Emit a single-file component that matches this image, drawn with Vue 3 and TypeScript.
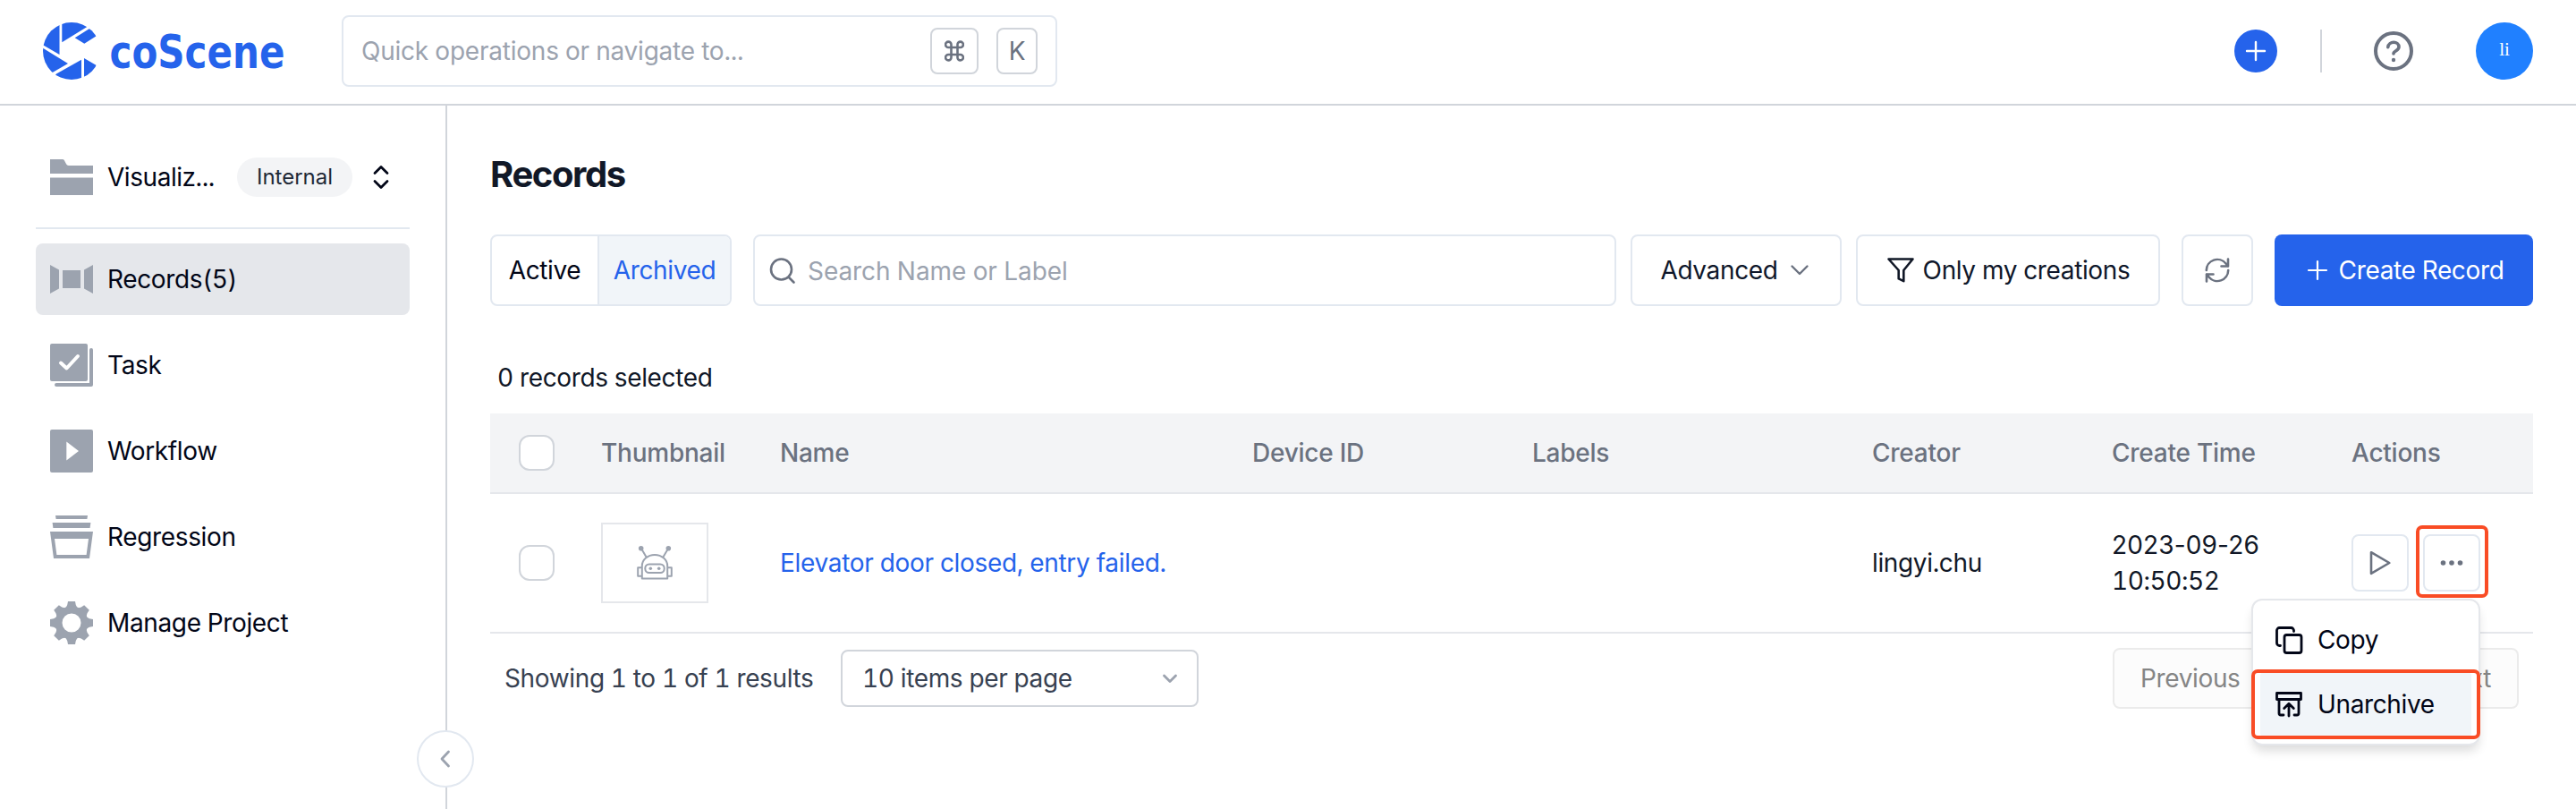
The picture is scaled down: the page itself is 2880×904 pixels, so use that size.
<script setup lang="ts">
import { ref } from 'vue'

interface NavItem {
  id: string
  label: string
}

const navItems: NavItem[] = [
  { id: 'records', label: 'Records(5)' },
  { id: 'task', label: 'Task' },
  { id: 'workflow', label: 'Workflow' },
  { id: 'regression', label: 'Regression' },
  { id: 'manage', label: 'Manage Project' },
]
const activeNav = ref('records')
const tab = ref<'Active' | 'Archived'>('Archived')
const columns: string[] = ['Thumbnail', 'Name', 'Device ID', 'Labels', 'Creator', 'Create Time', 'Actions']
const gearTeeth: number[] = [0, 45, 90, 135, 180, 225, 270, 315]
</script>

<template>
  <div class="app">
    <header class="topbar">
      <svg class="logo" width="278" height="64" viewBox="0 0 278 64">
        <defs>
          <clipPath id="disc"><circle cx="32" cy="32" r="32" /></clipPath>
        </defs>
        <g clip-path="url(#disc)">
          <path d="M18.5 0V36L0 25.2V0Z" />
          <path d="M21.3 0H56L49.3 5 21.3 22.3Z" />
          <path d="M52 7 56 6 62 14 59.7 15.3 46.3 23.7 35.7 17.3Z" />
          <path d="M0 28.8 28 46 12 55.3 0 62Z" />
          <path d="M43 41.7V64H10L15 57.5Z" />
          <path d="M46 40 59.7 48 58 64H46Z" />
        </g>
        <text x="74.5" y="51" textLength="196" lengthAdjust="spacingAndGlyphs">coScene</text>
      </svg>
      <div class="quick">
        <span class="placeholder">Quick operations or navigate to...</span>
        <kbd class="cmd">
          <svg width="22" height="24" viewBox="0 0 22 24" class="cmd-icon">
            <path d="M7.5 8V4.8A3.2 3.2 0 1 0 4.4 8H17.6A3.2 3.2 0 1 0 14.5 4.8V19.2A3.2 3.2 0 1 0 17.6 16H4.4A3.2 3.2 0 1 0 7.5 19.2Z" />
          </svg>
        </kbd>
        <kbd class="key">K</kbd>
      </div>
      <div class="top-actions">
        <button class="add">
          <svg width="24" height="24" viewBox="0 0 24 24"><path d="M12 2V22M2 12H22" /></svg>
        </button>
        <span class="rule"></span>
        <svg class="help" width="44" height="44" viewBox="0 0 44 44">
          <circle cx="22" cy="22" r="20" />
          <path d="M15.8 17.6C16.6 10.4 28 10.6 28 17.4C28 21.6 22 21.6 22 25" />
          <circle class="dot" cx="22" cy="32" r="2.2" />
        </svg>
        <span class="avatar">li</span>
      </div>
    </header>

    <div class="body">
      <aside class="sidebar">
        <div class="project">
          <svg width="48" height="48" viewBox="0 0 48 48" class="nav-icon">
            <path d="M0 4H14C17 4 17 11 21 11H48V20H0ZM0 24.5H48V44H0Z" />
          </svg>
          <span class="project-name">Visualiz...</span>
          <span class="pill">Internal</span>
          <svg width="20" height="28" viewBox="0 0 20 28" class="updown"><path d="M3 9.5 10 2.5 17 9.5M3 18.5 10 25.5 17 18.5" /></svg>
        </div>
        <nav class="nav">
          <a v-for="item in navItems" :key="item.id" class="nav-item" :class="{ active: item.id === activeNav }" @click="activeNav = item.id">
            <svg width="48" height="48" viewBox="0 0 48 48" class="nav-icon">
              <path v-if="item.id === 'records'" d="M0 8 10 13.5V34.5L0 40ZM14 14H34V34H14ZM48 8 38 13.5V34.5L48 40Z" />
              <template v-else-if="item.id === 'task'">
                <rect width="42" height="42" rx="2" />
                <path class="line check" d="M12 21.5 18.5 27.5 31 14" />
                <path class="line" d="M7 46H46V7" />
              </template>
              <template v-else-if="item.id === 'workflow'">
                <rect width="48" height="48" rx="2" />
                <path class="white" d="M18.3 13.5 32 24 18.3 34.5Z" />
              </template>
              <template v-else-if="item.id === 'regression'">
                <path d="M6 0H42L41.4 4H6.6ZM2.6 8H45.4L44.6 14H3.4Z" />
                <path fill-rule="evenodd" d="M0 18H48L44 48H4ZM5 26 7.4 44H40.6L43 26Z" />
              </template>
              <template v-else>
                <path v-for="a in gearTeeth" :key="a" d="M16.5 9 19.2 4 20 0H28L28.8 4 31.5 9Z" :transform="`rotate(${a} 24 24)`" />
                <circle class="ring" cx="24" cy="24" r="14.5" />
              </template>
            </svg>
            <span>{{ item.label }}</span>
          </a>
        </nav>
        <button class="collapse">
          <svg width="24" height="24" viewBox="0 0 24 24"><path d="M15.5 4 8 12 15.5 20" /></svg>
        </button>
      </aside>

      <main class="main">
        <h1>Records</h1>
        <div class="toolbar">
          <div class="segmented">
            <button class="seg" :class="{ on: tab === 'Active' }" @click="tab = 'Active'">Active</button>
            <button class="seg" :class="{ on: tab === 'Archived' }" @click="tab = 'Archived'">Archived</button>
          </div>
          <div class="search">
            <svg width="32" height="32" viewBox="0 0 32 32"><circle cx="14.5" cy="14" r="11.5" /><path d="M23 23 28.5 28.5" /></svg>
            <span>Search Name or Label</span>
          </div>
          <button class="btn advanced">
            <span>Advanced</span>
            <svg width="24" height="24" viewBox="0 0 24 24"><path d="M3.5 7.5 12 16 20.5 7.5" /></svg>
          </button>
          <button class="btn mine">
            <svg width="32" height="32" viewBox="0 0 32 32"><path d="M2.5 3.5H29.5L19.3 16V28.2L13.7 25.4V16Z" /></svg>
            <span>Only my creations</span>
          </button>
          <button class="btn refresh">
            <svg width="32" height="32" viewBox="0 0 32 32">
              <path d="M3.8 16A12.2 12.2 0 0 1 25.5 8.5L28 11.5M28 3.5V11.5H20.5M28.2 16A12.2 12.2 0 0 1 6.5 23.5L4 20.5M4 28.5V20.5H11.5" />
            </svg>
          </button>
          <button class="btn create">
            <svg width="24" height="24" viewBox="0 0 24 24"><path d="M12 2V22M2 12H22" /></svg>
            <span>Create Record</span>
          </button>
        </div>

        <p class="selected">0 records selected</p>

        <div class="row head">
          <span class="check-cell"><i class="box"></i></span>
          <span v-for="c in columns" :key="c">{{ c }}</span>
        </div>
        <div class="row record">
          <span class="check-cell"><i class="box"></i></span>
          <span>
            <span class="thumb">
              <svg width="40" height="40" viewBox="0 0 40 40">
                <path d="M5.8 37.6V23.5A14.2 12.6 0 0 1 34.2 23.5V37.6ZM5.8 25.2H1.2V34.8H5.8M34.2 25.2H38.8V34.8H34.2M10.3 13 5 4M29.7 13 35 4" />
                <rect x="9.3" y="21.4" width="21.4" height="9.6" rx="4.5" />
                <g class="fill">
                  <circle cx="4.7" cy="3.8" r="2.8" /><circle cx="35.3" cy="3.8" r="2.8" />
                  <circle cx="15.3" cy="26.2" r="1.8" /><circle cx="24.7" cy="26.2" r="1.8" />
                </g>
              </svg>
            </span>
          </span>
          <a class="link">Elevator door closed, entry failed.</a>
          <span></span>
          <span></span>
          <span class="creator">lingyi.chu</span>
          <span class="time">
            <span class="date">2023-09-26</span>
            <span class="clock">10:50:52</span>
          </span>
          <span class="actions">
            <button class="icon-btn">
              <svg width="32" height="32" viewBox="0 0 32 32"><path d="M6 4.2 26.3 16 6 27.8Z" /></svg>
            </button>
            <button class="icon-btn more">
              <svg width="32" height="32" viewBox="0 0 32 32"><g class="fill"><circle cx="6.5" cy="16" r="2.8" /><circle cx="16" cy="16" r="2.8" /><circle cx="25.5" cy="16" r="2.8" /></g></svg>
              <span class="mark mark-more"></span>
            </button>
            <div class="menu">
              <div class="menu-item">
                <svg width="32" height="32" viewBox="0 0 32 32">
                  <path d="M6.5 22.5H5.5A3 3 0 0 1 2.5 19.5V5.5A3 3 0 0 1 5.5 2.5H18.5A3 3 0 0 1 21.5 5.5V6.5" /><rect x="11" y="10.5" width="19" height="20" rx="2.5" />
                </svg>
                <span>Copy</span>
              </div>
              <div class="menu-item hover">
                <svg width="32" height="32" viewBox="0 0 32 32">
                  <path d="M2.5 3.5H29.5V10.5H2.5ZM5 10.5V26A2 2 0 0 0 7 28H10M27 10.5V26A2 2 0 0 1 25 28H22M16 29V16M10.7 20.5 16 15.3 21.3 20.5" />
                </svg>
                <span>Unarchive</span>
                <span class="mark mark-item"></span>
              </div>
            </div>
          </span>
        </div>

        <div class="footer">
          <span class="showing">Showing 1 to 1 of 1 results</span>
          <div class="select">
            <span>10 items per page</span>
            <svg width="20" height="20" viewBox="0 0 20 20"><path d="M3.5 7 10 13.5 16.5 7" /></svg>
          </div>
          <div class="pager">
            <button class="page">Previous</button>
            <button class="page">Next</button>
          </div>
        </div>
      </main>
    </div>
  </div>
</template>

<style>
body {
  background: #fff;
  overflow: hidden;
}
</style>

<style scoped>
.app {
  width: 2880px;
  height: 904px;
  display: flex;
  flex-direction: column;
  overflow: hidden;
  background: #fff;
  color: #020617;
  font-family: Inter, "Liberation Sans", sans-serif;
  font-size: 28px;
  font-variant-numeric: tabular-nums;
  line-height: 40px;
  letter-spacing: -0.36px;
}
.app *,
.app {
  box-sizing: border-box;
}
svg {
  flex: none;
  fill: none;
  stroke-linecap: round;
  stroke-linejoin: round;
}
button,
kbd {
  font: inherit;
  font-variant-numeric: inherit;
  letter-spacing: inherit;
  margin: 0;
  padding: 0;
  background: none;
  color: inherit;
}
.topbar {
  height: 118px;
  flex: none;
  display: flex;
  align-items: center;
  padding: 0 48px 2px;
  border-bottom: 2px solid #d1d5db;
}
.logo {
  fill: #2563eb;
  overflow: visible;
}
.logo text {
  font-family: "DejaVu Sans", sans-serif;
  font-weight: 700;
  font-size: 52px;
  letter-spacing: 0;
}
.quick {
  width: 800px;
  height: 80px;
  margin-left: 56px;
  display: flex;
  align-items: center;
  padding: 0 20px;
  border: 2px solid #e2e8f0;
  border-radius: 8px;
}
.placeholder {
  flex: 1;
  color: #9ca3af;
  letter-spacing: -0.22px;
}
kbd {
  height: 52px;
  display: flex;
  align-items: center;
  justify-content: center;
  border: 2px solid #d1d5db;
  border-radius: 8px;
  color: #6b7280;
}
.cmd {
  width: 54px;
}
.key {
  width: 46px;
  margin-left: 20px;
}
.cmd-icon {
  stroke: #6b7280;
  stroke-width: 2.6;
}
.top-actions {
  margin-left: auto;
  display: flex;
  align-items: center;
}
.add {
  width: 48px;
  height: 48px;
  border: 0;
  border-radius: 50%;
  background: #2563eb;
  display: grid;
  place-items: center;
}
.add svg {
  stroke: #fff;
  stroke-width: 2.4;
}
.rule {
  width: 2px;
  height: 48px;
  margin: 0 58px 0 48px;
  background: #d1d5db;
}
.help {
  stroke: #6b7280;
  stroke-width: 4;
}
.help path {
  stroke-width: 3.6;
}
.help .dot {
  fill: #6b7280;
  stroke: none;
}
.avatar {
  width: 64px;
  height: 64px;
  margin-left: 70px;
  border-radius: 50%;
  background: #2080ff;
  color: #fff;
  font: 21px/60px "Liberation Serif", serif;
  letter-spacing: 0;
  text-align: center;
}
.body {
  flex: 1;
  display: flex;
  min-height: 0;
}
.sidebar {
  position: relative;
  width: 500px;
  flex: none;
  padding: 0 40px;
  border-right: 2px solid #d1d5db;
}
.project {
  height: 138px;
  display: flex;
  align-items: center;
  padding: 24px 22px 0 16px;
  border-bottom: 2px solid #e2e8f0;
}
.nav-icon {
  fill: #9ca3af;
}
.project-name {
  margin-left: 16px;
  width: 145px;
  letter-spacing: -0.45px;
}
.pill {
  width: 129px;
  height: 44px;
  border-radius: 22px;
  background: #f3f4f6;
  color: #1f2937;
  font-size: 24px;
  line-height: 44px;
  letter-spacing: 0;
  text-align: center;
}
.updown {
  margin-left: auto;
  stroke: #020617;
  stroke-width: 2.8;
}
.nav {
  display: flex;
  flex-direction: column;
  gap: 16px;
  margin-top: 16px;
}
.nav-item {
  height: 80px;
  display: flex;
  align-items: center;
  gap: 16px;
  padding: 0 16px;
  border-radius: 8px;
}
.nav-item.active {
  background: #e5e7eb;
}
.line {
  fill: none;
  stroke: #9ca3af;
  stroke-width: 4;
}
.check {
  stroke: #fff;
}
.white {
  fill: #fff;
}
.ring {
  fill: none;
  stroke: #9ca3af;
  stroke-width: 8;
}
.collapse {
  position: absolute;
  right: -32px;
  bottom: 24px;
  width: 64px;
  height: 64px;
  border: 2px solid #e2e8f0;
  border-radius: 50%;
  background: #fff;
  display: grid;
  place-items: center;
}
.collapse svg {
  stroke: #9ca3af;
  stroke-width: 2.8;
}
.main {
  flex: 1;
  min-width: 0;
  padding: 49px 48px 0;
}
h1 {
  margin: 0;
  color: #111827;
  font-size: 40px;
  font-weight: 650;
  line-height: 56px;
  letter-spacing: -1.4px;
}
.toolbar {
  display: flex;
  height: 80px;
  margin-top: 39px;
}
.segmented {
  width: 270px;
  display: flex;
  border: 2px solid #e2e8f0;
  border-radius: 8px;
  overflow: hidden;
}
.seg {
  border: 0;
  flex: 1;
}
.seg:first-child {
  flex: none;
  width: 120px;
  border-right: 2px solid #e2e8f0;
}
.seg.on {
  background: #f1f5f9;
  color: #2563eb;
}
.search {
  width: 965px;
  margin-left: 24px;
  display: flex;
  align-items: center;
  gap: 12px;
  padding: 2px 0 0 15px;
  border: 2px solid #e2e8f0;
  border-radius: 8px;
  color: #9ca3af;
  letter-spacing: -0.08px;
}
.search svg {
  stroke: #6b7280;
  stroke-width: 2.6;
}
.btn {
  display: flex;
  align-items: center;
  justify-content: center;
  border: 2px solid #e2e8f0;
  border-radius: 8px;
  color: #0f172a;
}
.advanced {
  width: 236px;
  margin-left: 16px;
  padding-right: 2px;
  gap: 12px;
}
.advanced svg {
  stroke: #6b7280;
  stroke-width: 2.4;
}
.mine {
  width: 340px;
  margin-left: 16px;
  gap: 9px;
}
.mine svg {
  stroke: #111827;
  stroke-width: 2.6;
}
.refresh {
  width: 80px;
  margin-left: 24px;
}
.refresh svg {
  stroke: #6b7280;
  stroke-width: 2.6;
}
.create {
  width: 289px;
  margin-left: 24px;
  gap: 12px;
  padding-left: 3px;
  border: 0;
  background: #2563eb;
  color: #fff;
}
.create svg {
  stroke: #fff;
  stroke-width: 2.2;
}
.selected {
  margin: 60px 0 20px 8px;
  color: #111827;
}
.row {
  display: grid;
  grid-template-columns: 124px 200px 528px 313px 380px 268px 268px 203px;
  align-items: center;
}
.head {
  height: 90px;
  border-bottom: 2px solid #e5e7eb;
  background: #f3f4f6;
  color: #6b7280;
  font-weight: 500;
  letter-spacing: -0.24px;
}
.record {
  height: 156px;
  border-bottom: 2px solid #e5e7eb;
  color: #111827;
}
.check-cell {
  padding-left: 32px;
}
.box {
  display: block;
  width: 40px;
  height: 40px;
  border: 2px solid #d1d5db;
  border-radius: 12px;
  background: #fff;
}
.thumb {
  width: 120px;
  height: 90px;
  display: grid;
  place-items: center;
  border: 2px solid #e5e7eb;
}
.thumb svg {
  stroke: #9ca3af;
  stroke-width: 2;
}
.fill {
  fill: #9ca3af;
  stroke: none;
}
.link {
  color: #2563eb;
  letter-spacing: -0.31px;
}
.time {
  display: flex;
  flex-direction: column;
}
.date {
  font-variant-numeric: normal;
  letter-spacing: 0.15px;
}
.clock {
  letter-spacing: -0.45px;
}
.actions {
  position: relative;
  display: flex;
  gap: 16px;
}
.icon-btn {
  position: relative;
  width: 64px;
  height: 64px;
  display: grid;
  place-items: center;
  border: 2px solid #e2e8f0;
  border-radius: 8px;
}
.icon-btn svg {
  stroke: #6b7280;
  stroke-width: 2.6;
}
.icon-btn .fill {
  fill: #6b7280;
  stroke: none;
}
.mark {
  position: absolute;
  border: 4px solid #f94c25;
  border-radius: 7px;
}
.mark-more {
  inset: -12px -11px -9px -10px;
}
.menu {
  position: absolute;
  z-index: 2;
  right: 59px;
  top: 72px;
  width: 256px;
  height: 164px;
  padding: 8px;
  border: 2px solid #e5e7eb;
  border-radius: 12px;
  background: #fff;
  color: #020617;
  box-shadow: 0 8px 12px -2px rgba(0, 0, 0, 0.14);
}
.menu-item {
  position: relative;
  height: 72px;
  display: flex;
  align-items: center;
  gap: 16px;
  padding-left: 16px;
  border-radius: 4px;
}
.menu-item svg {
  stroke: #020617;
  stroke-width: 2.8;
}
.hover {
  background: #f1f5f9;
}
.mark-item {
  inset: -3px -10px -3px -10px;
}
.footer {
  display: flex;
  align-items: center;
  height: 100px;
  padding: 0 16px;
  color: #374151;
}
.showing {
  width: 376px;
}
.select {
  width: 400px;
  height: 64px;
  display: flex;
  align-items: center;
  justify-content: space-between;
  padding: 0 20px 0 22px;
  border: 2px solid #d1d5db;
  border-radius: 8px;
}
.select svg {
  stroke: #9ca3af;
  stroke-width: 2.8;
}
.pager {
  margin-left: auto;
  display: flex;
  gap: 16px;
}
.page {
  height: 68px;
  padding: 0 29px;
  border: 2px solid #ebebeb;
  border-radius: 8px;
  background: #fcfcfc;
  color: #858585;
}
.page:first-child {
  width: 172px;
}
.page:last-child {
  width: 266px;
  text-align: right;
}
</style>
